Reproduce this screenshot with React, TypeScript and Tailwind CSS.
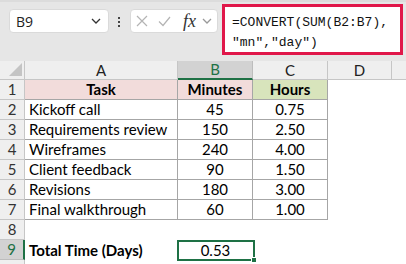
import React from "react";

const rows = [
  ["Kickoff call", "45", "0.75"],
  ["Requirements review", "150", "2.50"],
  ["Wireframes", "240", "4.00"],
  ["Client feedback", "90", "1.50"],
  ["Revisions", "180", "3.00"],
  ["Final walkthrough", "60", "1.00"],
];

const cellFont = { fontFamily: "Lato, 'Liberation Sans', sans-serif" };

function Chevron({ color = "#333" }: { color?: string }) {
  return (
    <svg width="10" height="6" viewBox="0 0 10 6" fill="none">
      <path d="M1 1l4 4 4-4" stroke={color} strokeWidth="1.3" />
    </svg>
  );
}

function RowHead({ n, active }: { n?: number; active?: boolean }) {
  return (
    <div
      className={
        active
          ? "h-[20px] flex items-center justify-center bg-[#d2d2d2] border-b border-[#bdbdbd] border-r-2 border-r-[#1e7145] text-[#1e7145] text-[15px]"
          : "h-[20px] flex items-center justify-center bg-[#efefef] border-b border-r border-[#c6c6c6] text-[#333] text-[15px]"
      }
    >
      {n}
    </div>
  );
}

export default function App() {
  return (
    <div className="w-[406px] h-[264px] overflow-hidden bg-white" style={cellFont}>
      {/* Top bar */}
      <div className="h-[61px] bg-[#e6e6e6] border-t-[2px] border-[#dcdcdc] flex items-start">
        <div className="ml-[9px] mt-[7px] w-[100px] h-[24px] rounded-[4px] bg-white border border-[#dadada] flex items-center pl-[6px] pr-[7px] justify-between">
          <span className="text-[14px] text-[#222]" style={{ fontFamily: "'Open Sans', sans-serif" }}>B9</span>
          <Chevron />
        </div>
        <div className="ml-[9px] mt-[15px] flex flex-col gap-[2px]">
          <div className="w-[2px] h-[2px] bg-[#444]" />
          <div className="w-[2px] h-[2px] bg-[#444]" />
          <div className="w-[2px] h-[2px] bg-[#444]" />
        </div>
        <div className="ml-[10px] mt-[7px] w-[88px] h-[24px] rounded-[4px] bg-white border border-[#dadada] flex items-center pl-[5px]">
          <svg width="12" height="12" viewBox="0 0 12 12">
            <path d="M1 1l10 10M11 1L1 11" stroke="#b4b4b4" strokeWidth="1.2" />
          </svg>
          <svg className="ml-[10px]" width="13" height="11" viewBox="0 0 13 11">
            <path d="M1 5.5l4 4L12 1" stroke="#b4b4b4" strokeWidth="1.2" fill="none" />
          </svg>
          <span className="ml-[12px] text-[18px] italic text-[#333] leading-none" style={{ fontFamily: "'Liberation Serif', serif" }}>fx</span>
          <span className="ml-[6px]"><Chevron color="#999" /></span>
        </div>
        <div className="ml-[4px] mt-[2px] w-[181px] h-[51px] border-[3px] border-[#e0174a] bg-white pl-[7px] pt-[6px] text-[13px] leading-[20px] text-[#111]" style={{ fontFamily: "'Liberation Mono', monospace" }}>
          <div>=CONVERT(SUM(B2:B7),</div>
          <div>"mn","day")</div>
        </div>
      </div>

      {/* Grid */}
      <div className="grid grid-cols-[25px_153px_75px_75px_64px_14px]">
        {/* header row */}
        <div className="h-[19px] bg-[#efefef] border-r border-b border-[#c6c6c6] relative">
          <svg className="absolute left-[9px] top-[2px]" width="13" height="13" viewBox="0 0 13 13">
            <path d="M13 0V13H0Z" fill="#c4c4c4" />
          </svg>
        </div>
        <div className="h-[19px] bg-[#efefef] border-r border-b border-[#c6c6c6] flex items-center justify-center text-[15px] text-[#222]">A</div>
        <div className="h-[19px] bg-[#d2d2d2] border-r border-[#bdbdbd] border-b-2 border-b-[#1e7145] flex items-center justify-center text-[15px] text-[#1e7145]">B</div>
        <div className="h-[19px] bg-[#efefef] border-r border-b border-[#c6c6c6] flex items-center justify-center text-[15px] text-[#222]">C</div>
        <div className="h-[19px] bg-[#efefef] border-r border-b border-[#c6c6c6] flex items-center justify-center text-[15px] text-[#222]">D</div>
        <div className="h-[19px] bg-[#efefef] border-b border-[#c6c6c6]" />

        {/* row 1 */}
        <RowHead n={1} />
        <div className="h-[20px] bg-[#f2dcdb] border-r border-b border-[#a6a6a6] flex items-center justify-center font-bold text-[15px] text-black">Task</div>
        <div className="h-[20px] bg-[#f2dcdb] border-r border-b border-[#a6a6a6] flex items-center justify-center font-bold text-[15px] text-black">Minutes</div>
        <div className="h-[20px] bg-[#d8e4bc] border-r border-b border-[#a6a6a6] flex items-center justify-center font-bold text-[15px] text-black">Hours</div>
        <div className="h-[20px]" />
        <div className="h-[20px]" />

        {rows.map((r, i) => (
          <React.Fragment key={i}>
            <RowHead n={i + 2} />
            <div className="h-[20px] border-r border-b border-[#a6a6a6] flex items-center pl-[4px] text-[15px] text-black">{r[0]}</div>
            <div className="h-[20px] border-r border-b border-[#a6a6a6] flex items-center justify-center text-[15px] text-black">{r[1]}</div>
            <div className="h-[20px] border-r border-b border-[#a6a6a6] flex items-center justify-center text-[15px] text-black">{r[2]}</div>
            <div className="h-[20px]" />
            <div className="h-[20px]" />
          </React.Fragment>
        ))}

        {/* row 8 */}
        <RowHead n={8} />
        <div className="h-[20px]" />
        <div className="h-[20px]" />
        <div className="h-[20px]" />
        <div className="h-[20px]" />
        <div className="h-[20px]" />

        {/* row 9 */}
        <RowHead n={9} active />
        <div className="h-[20px] flex items-center pl-[4px] font-bold text-[15px] text-black">Total Time (Days)</div>
        <div className="h-[20px] relative flex items-center justify-center text-[15px] text-black">
          0.53
          <div className="absolute top-0 left-[-1px] right-[-2px] bottom-[-1px] border-2 border-[#1e7145]" />
          <div className="absolute right-[-4px] bottom-[-3px] w-[6px] h-[6px] bg-[#1e7145] border border-white" />
        </div>
        <div className="h-[20px]" />
        <div className="h-[20px]" />
        <div className="h-[20px]" />

        {/* row 10 partial */}
        <RowHead />
      </div>
    </div>
  );
}
